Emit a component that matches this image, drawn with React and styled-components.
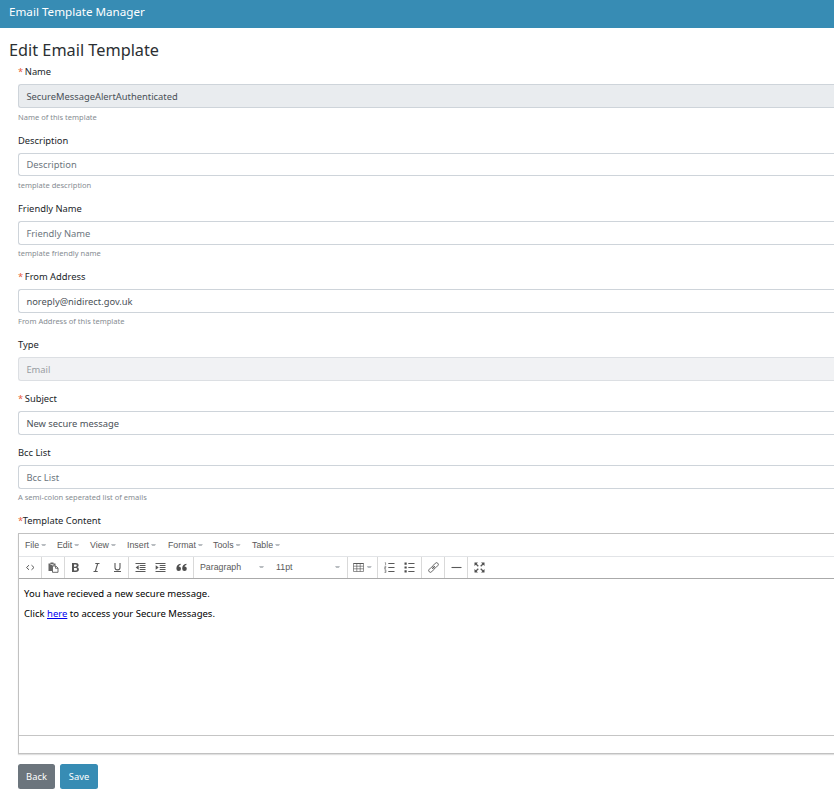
import React from 'react';
import styled, { createGlobalStyle } from 'styled-components';

const Global = createGlobalStyle`
  * { box-sizing: border-box; }
  body {
    margin: 0;
    overflow: hidden;
    background: #fff;
    color: #212529;
    font-family: "Noto Sans", "Open Sans", sans-serif;
    font-size: 9.35px;
  }
`;

const Header = styled.header`
  height: 28px;
  padding-left: 9px;
  background: #378cb4;
  color: #fff;
  font-size: 11.65px;
  line-height: 24px;
`;

const Title = styled.h1`
  margin: 9px 0 0 9px;
  height: 27px;
  font-size: 16.27px;
  line-height: 26px;
  font-weight: 400;
  color: #2b2f33;
`;

const Form = styled.form`
  display: flex;
  flex-direction: column;
  padding-left: 18px;
`;

const Field = styled.div`
  height: ${(p) => p.$height}px;
`;

const Label = styled.label`
  display: block;
  height: 20px;
  line-height: 16px;
  color: #212529;
  white-space: pre;
`;

const Star = styled.span`
  color: #e8603c;
  letter-spacing: -0.4px;
`;

const Input = styled.input`
  display: block;
  width: 100%;
  height: ${(p) => p.$height || 24}px;
  padding: ${(p) => (p.$height ? '0 7.4px 1px' : '1px 7.4px 0')};
  border: 1px solid ${(p) => (p.disabled ? '#dcdfe3' : '#ced4da')};
  border-right: 0;
  border-radius: 3px 0 0 3px;
  background: ${(p) => (p.disabled ? '#f1f2f4' : p.readOnly ? '#e9ecef' : '#fff')};
  color: ${(p) => (p.disabled ? '#989da2' : '#495057')};
  font: inherit;
  outline: 0;
  &::placeholder { color: #6c757d; opacity: 1; }
`;

const Help = styled.small`
  display: block;
  margin-top: ${(p) => p.$gap}px;
  font-size: 7.53px;
  line-height: 11px;
  color: #868c92;
`;

const Editor = styled.section`
  height: 221px;
  display: flex;
  flex-direction: column;
  border: 1px solid #c1c1c1;
  border-right: 0;
  box-shadow: 0 1px 1px rgba(0, 0, 0, 0.12);
  font-family: "Liberation Sans", Arial, sans-serif;
  font-size: 8.8px;
  color: #595959;
`;

const MenuBar = styled.div`
  display: grid;
  grid-template-columns: 32px 33px 37px 41px 45px 39px 40px;
  align-items: center;
  height: 22px;
  padding-left: 6px;
`;

const MenuItem = styled.span`
  display: flex;
  align-items: center;
  gap: 2px;
  white-space: nowrap;
`;

const Caret = styled.i`
  width: 5px;
  height: 2px;
  background: #b9bdc1;
  clip-path: polygon(0 0, 100% 0, 75% 100%, 25% 100%);
`;

const ToolBar = styled.div`
  display: flex;
  height: 23px;
  border-top: 1px solid #e2e4e7;
  border-bottom: 1px solid #aaa;
`;

const Group = styled.div`
  display: flex;
  align-items: center;
  justify-content: space-around;
  width: ${(p) => p.$width}px;
  padding: 0 ${(p) => p.$pad || 0}px 1px;
  border-right: ${(p) => (p.$last ? 0 : '1px solid #d9d9d9')};
`;

const SelectGroup = styled(Group)`
  justify-content: flex-start;
  gap: 12px;
  padding-left: 6px;
`;

const Select = styled.span`
  display: flex;
  align-items: center;
  justify-content: space-between;
  width: 64px;
`;

const Icon = styled.svg`
  flex: none;
  display: block;
  width: 11px;
  height: 11px;
  fill: none;
  stroke: #595959;
  stroke-width: 1.1;
`;

const Content = styled.div`
  height: 157px;
  padding: 5px;
  border-bottom: 1px solid #c5c5c5;
  color: #000;
  font-family: "Noto Sans", "Open Sans", sans-serif;
  font-size: 9.5px;
`;

const Paragraph = styled.p`
  margin: 0;
  line-height: 20px;
`;

const Link = styled.a`
  color: #00e;
  text-decoration: underline;
`;

const Actions = styled.div`
  display: flex;
  gap: 5px;
  margin-top: 10px;
`;

const Button = styled.button`
  width: ${(p) => p.$width}px;
  height: 25px;
  padding: 0;
  border: 0;
  border-radius: 2.5px;
  background: ${(p) => (p.$primary ? '#378cb4' : '#6c757d')};
  color: #fff;
  font: inherit;
`;

const fields = [
  { label: 'Name', required: true, value: 'SecureMessageAlertAuthenticated', readOnly: true, help: 'Name of this template', helpGap: 4, height: 69 },
  { label: 'Description', placeholder: 'Description', inputHeight: 23, help: 'template description', helpGap: 4, height: 68 },
  { label: 'Friendly Name', placeholder: 'Friendly Name', help: 'template friendly name', height: 68 },
  { label: 'From Address', required: true, value: 'noreply@nidirect.gov.uk', help: 'From Address of this template', height: 68 },
  { label: 'Type', value: 'Email', disabled: true, height: 54 },
  { label: 'Subject', required: true, value: 'New secure message', height: 54 },
  { label: 'Bcc List', placeholder: 'Bcc List', help: 'A semi-colon seperated list of emails', height: 68 },
];

const menus = ['File', 'Edit', 'View', 'Insert', 'Format', 'Tools', 'Table'];

const CodeIcon = () => (
  <Icon viewBox="0 0 11 11"><path d="M4 3.200 1.500 5.500 4 7.800M6.500 3.200 9 5.500 6.500 7.800" strokeWidth="1" /></Icon>
);
const PasteIcon = () => (
  <Icon viewBox="0 0 11 11">
    <path d="M.5 1.500H2.500V.5h3v1h2v2H4V9H.5z" fill="#666" stroke="none" />
    <path d="M2.500 2.500h3" stroke="#fff" strokeWidth=".7" />
    <path d="M4.500 4h3.300L10 6v4.300H4.500z" fill="#fff" strokeWidth=".9" />
    <path d="M7.500 4v2.300H10" strokeWidth=".8" />
  </Icon>
);
const BoldIcon = () => (
  <Icon viewBox="0 0 11 11"><path d="M2 1h3.900c1.700 0 2.700.9 2.700 2.300 0 .9-.5 1.600-1.300 1.900 1 .3 1.600 1.100 1.600 2.100C8.900 9 7.700 10 5.900 10H2zM4 2.500v2.200h1.500c.8 0 1.200-.4 1.200-1.100s-.4-1.100-1.200-1.100zM4 6.100v2.400h1.600c.9 0 1.400-.4 1.400-1.200S6.500 6.100 5.600 6.100z" fill="#555" fillRule="evenodd" stroke="none" /></Icon>
);
const ItalicIcon = () => (
  <Icon viewBox="0 0 11 11"><path d="M4.300 1.500h4.200M2.500 9.500h4.200M6.700 1.500 4.300 9.500" /></Icon>
);
const UnderlineIcon = () => (
  <Icon viewBox="0 0 11 11"><path d="M3 1v4.400a2.500 2.500 0 0 0 5 0V1M2 9.500h7" /></Icon>
);
const IndentIcon = ({ outdent }) => (
  <Icon viewBox="0 0 11 11">
    <path d="M.5 1.500h10M4.700 3.500h5.800M4.700 5.500h5.800M4.700 7.500h5.800M.5 9.500h10" strokeWidth="1" />
    <path d={outdent ? 'M3.700 3.200v4.600L.7 5.500z' : 'M.7 3.200v4.600l3-2.300z'} fill="#555" stroke="none" />
  </Icon>
);
const QuoteIcon = () => (
  <Icon viewBox="0 0 11 11">
    <path d="M4.600 1.800v1.100C3.500 3.100 2.900 3.700 2.700 4.500A2.300 2.300 0 1 1 .4 6.800C.3 4 2 2 4.600 1.800zM10.400 1.800v1.100c-1.100.2-1.700.8-1.900 1.600a2.300 2.300 0 1 1-2.300 2.300C6.100 4 7.800 2 10.400 1.800z" fill="#4d4d4d" stroke="none" />
  </Icon>
);
const TableIcon = () => (
  <Icon viewBox="0 0 11 11"><path d="M.5 1.500h10v8H.5zM.5 4.200h10M.5 6.800h10M3.800 1.500v8M7.200 1.500v8" strokeWidth=".65" /><path d="M.5 1.500h10" strokeWidth="1" /></Icon>
);
const ListIcon = ({ numbered }) => (
  <Icon viewBox="0 0 11 11">
    <path d="M4.300 1.500h6.200M4.300 5.500h6.200M4.300 9.500h6.200" />
    {numbered ? (
      <path d="M.8.700h.8v2.500M.5 4.300h1.300v1.200H.6v1.200H2M.5 7.800h1.400v2.700H.5M.7 9.100h1.200" strokeWidth=".6" />
    ) : (
      <path d="M.5.500h2.200v2.200H.5zM.5 4.400h2.200v2.200H.5zM.5 8.300h2.200v2.200H.5z" fill="#4d4d4d" stroke="none" />
    )}
  </Icon>
);
const LinkIcon = () => (
  <Icon viewBox="0 0 11 11">
    <g transform="rotate(-45 5.500 5.500)" strokeWidth=".9"><rect x="-.5" y="3.800" width="6.100" height="3.400" rx="1.600" /><rect x="5.400" y="3.800" width="6.100" height="3.400" rx="1.600" /><path d="M3.500 5.500h4" /></g>
  </Icon>
);
const RuleIcon = () => (
  <Icon viewBox="0 0 11 11"><path d="M.5 5.500h10" /></Icon>
);
const FullscreenIcon = () => (
  <Icon viewBox="0 0 11 11">
    <path d="M1.500 1.500l2.800 2.800M9.500 1.500 6.700 4.300M1.500 9.500l2.800-2.800M9.500 9.500 6.700 6.700" strokeWidth="1.300" />
    <path d="M.5.500H4L.5 4zM10.500.500H7L10.500 4zM.5 10.500H4L.5 7zM10.500 10.500H7L10.500 7z" fill="#4d4d4d" stroke="none" />
  </Icon>
);

export default function App() {
  return (
    <>
      <Global />
      <Header>Email Template Manager</Header>
      <Title>Edit Email Template</Title>
      <Form>
        {fields.map((f) => (
          <Field key={f.label} $height={f.height}>
            <Label>{f.required && <Star>* </Star>}{f.label}</Label>
            <Input
              $height={f.inputHeight}
              defaultValue={f.value}
              placeholder={f.placeholder}
              readOnly={f.readOnly}
              disabled={f.disabled}
              aria-label={f.label}
            />
            {f.help && <Help $gap={f.helpGap || 3}>{f.help}</Help>}
          </Field>
        ))}
        <Label><Star>*</Star>Template Content</Label>
        <Editor>
          <MenuBar>
            {menus.map((m) => <MenuItem key={m}>{m}<Caret /></MenuItem>)}
          </MenuBar>
          <ToolBar>
            <Group $width={23}><CodeIcon /></Group>
            <Group $width={23}><PasteIcon /></Group>
            <Group $width={64}><BoldIcon /><ItalicIcon /><UnderlineIcon /></Group>
            <Group $width={65} $pad={1}><IndentIcon outdent /><IndentIcon /><QuoteIcon /></Group>
            <SelectGroup $width={154}>
              <Select>Paragraph<Caret /></Select>
              <Select>11pt<Caret /></Select>
            </SelectGroup>
            <Group $width={30} $pad={4}><TableIcon /><Caret /></Group>
            <Group $width={44} $pad={1}><ListIcon numbered /><ListIcon /></Group>
            <Group $width={23}><LinkIcon /></Group>
            <Group $width={23}><RuleIcon /></Group>
            <Group $width={23} $last><FullscreenIcon /></Group>
          </ToolBar>
          <Content>
            <Paragraph>You have recieved a new secure message.</Paragraph>
            <Paragraph>Click <Link>here</Link> to access your Secure Messages.</Paragraph>
          </Content>
        </Editor>
        <Actions>
          <Button type="button" $width={37}>Back</Button>
          <Button type="button" $width={38} $primary>Save</Button>
        </Actions>
      </Form>
    </>
  );
}
